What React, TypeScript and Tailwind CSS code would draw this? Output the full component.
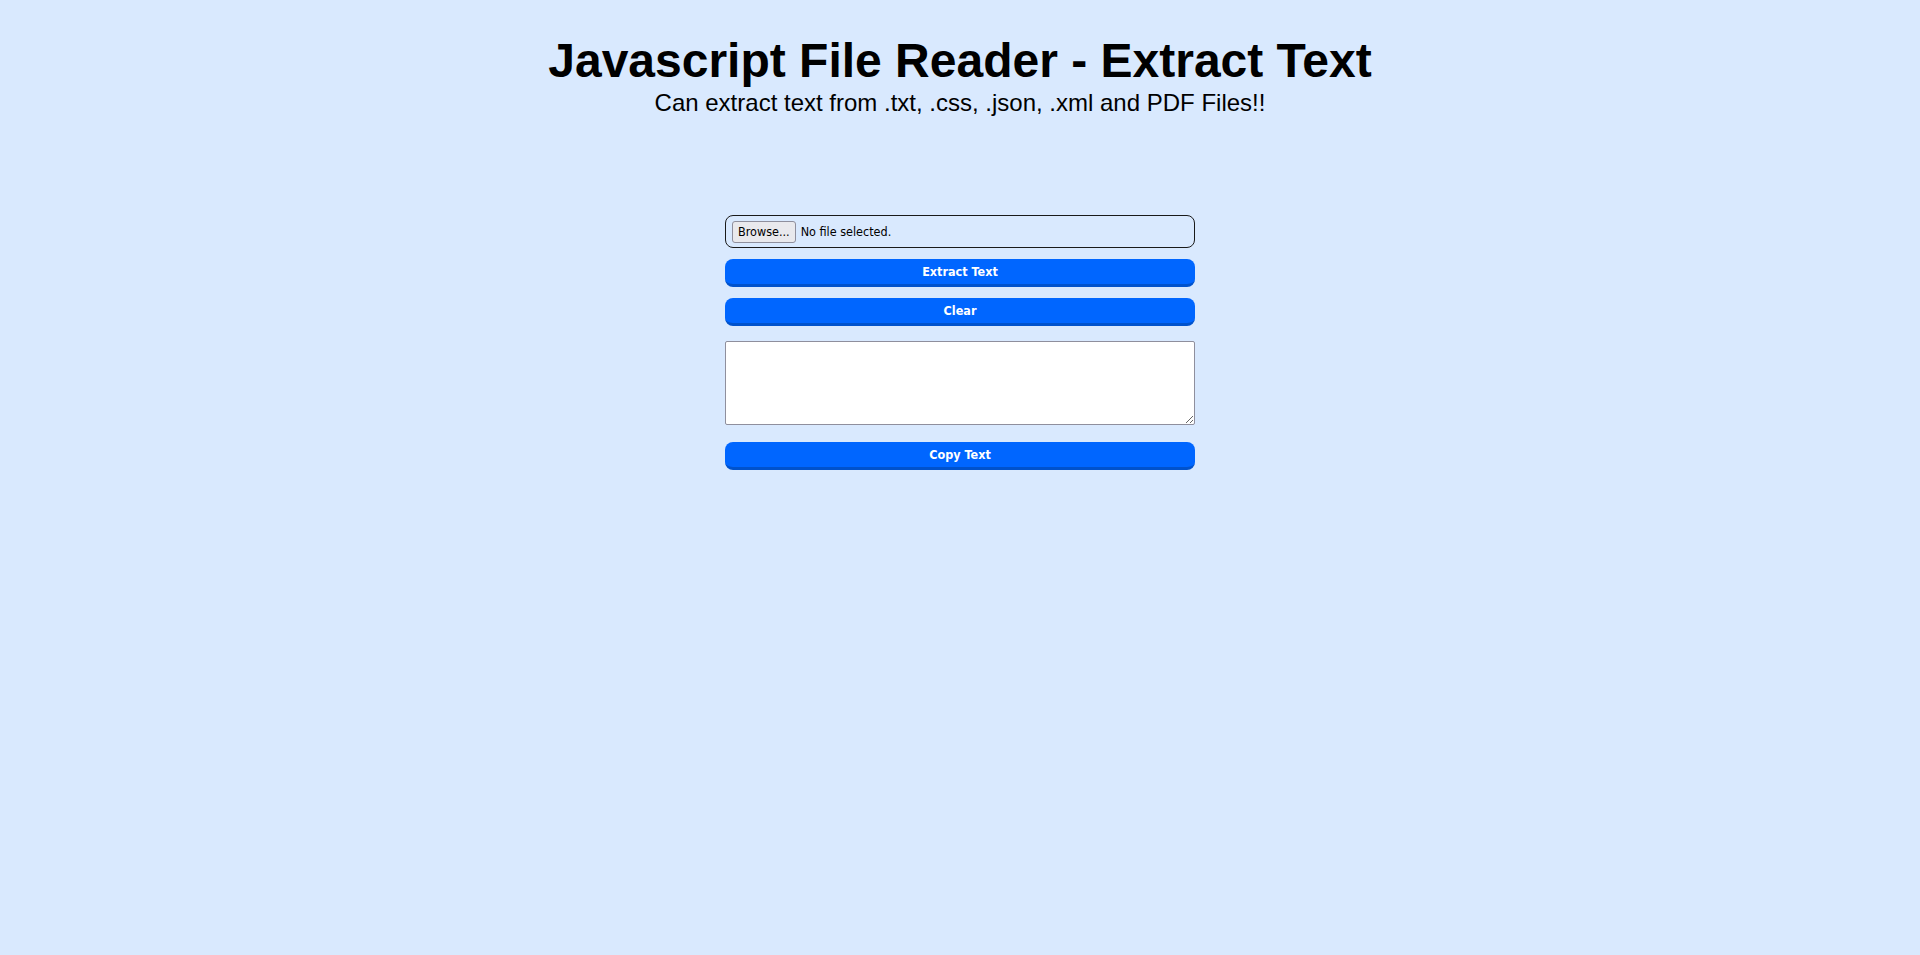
import React from "react";

const btn =
  "h-[28px] w-full rounded-[8px] bg-[#0066ff] border-b-[3px] border-[#0052cc] text-white font-bold text-[12.5px] font-stretch-condensed flex items-center justify-center pt-[2px]";

export default function App() {
  return (
    <div className="min-h-[955px] w-full bg-[#d9e9fe] flex flex-col items-center">
      <h1 className="mt-[33px] text-[48px] leading-[56px] font-bold text-black font-['Liberation_Sans',Arial,sans-serif]">
        Javascript File Reader - Extract Text
      </h1>
      <p className="text-[24px] leading-[28px] text-black font-['Liberation_Sans',Arial,sans-serif]">
        Can extract text from .txt, .css, .json, .xml and PDF Files!!
      </p>

      <div className="mt-[98px] w-[470px] flex flex-col font-['DejaVu_Sans_Condensed','DejaVu_Sans',sans-serif]">
        <div className="h-[33px] border border-[#1a1a1a] rounded-[8px] flex items-center px-[6px] gap-[5px]">
          <div className="h-[22px] px-[5px] pt-[1px] flex items-center rounded-[3px] border border-[#8f8f9d] bg-[#e9e9ed] text-[12.5px] font-stretch-condensed text-black">
            Browse...
          </div>
          <span className="text-[12.5px] font-stretch-condensed text-black pt-[2px]">No file selected.</span>
        </div>

        <button className={"mt-[11px] " + btn}>Extract Text</button>
        <button className={"mt-[11px] " + btn}>Clear</button>

        <textarea
          className="mt-[15px] h-[84px] w-full bg-white border border-[#8f8f9d] rounded-[2px] resize-y outline-none"
          defaultValue=""
        />

        <button className={"mt-[17px] " + btn}>Copy Text</button>
      </div>
    </div>
  );
}
